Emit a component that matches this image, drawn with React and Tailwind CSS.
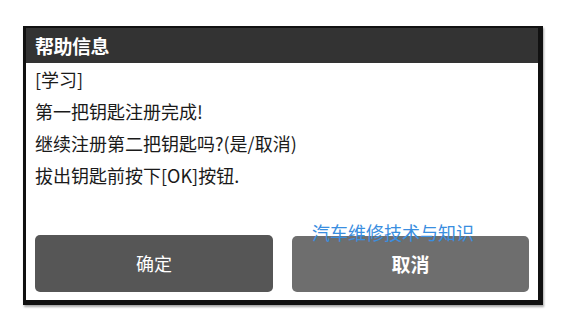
import React from "react";

const lines = [
  "[学习]",
  "第一把钥匙注册完成!",
  "继续注册第二把钥匙吗?(是/取消)",
  "拔出钥匙前按下[OK]按钮.",
];

const App = () => {
  return (
    <div
      className="relative w-[569px] h-[326px] bg-white pt-[26px] pl-[23px]"
      style={{ fontFamily: '"Noto Sans CJK SC", "Noto Sans", sans-serif' }}
    >
      {/* DIALOG */}
      <div className="w-[520px] h-[279px] flex flex-col border-l-[3px] border-t-[2px] border-r-[5px] border-b-[5px] border-[#111] bg-white shadow-[1px_2px_2px_rgba(0,0,0,0.35)]">
        {/* TITLE */}
        <div className="h-[35px] bg-[#333333] flex items-center pl-[9px] text-white text-[19px] font-bold leading-none tracking-[-0.5px]">
          帮助信息
        </div>

        {/* MESSAGE */}
        <div className="pl-[9px] text-[18px] leading-[32px] text-[#1a1a1a]">
          {lines.map((l) => (
            <p key={l}>{l}</p>
          ))}
        </div>

        {/* BUTTONS */}
        <div className="mt-auto mb-[8px] px-[9px] flex gap-[19px]">
          <button className="w-[238px] h-[57px] rounded-[5px] bg-[#565656] text-white text-[18px]">
            确定
          </button>
          <button className="w-[237px] h-[56px] mt-[1px] rounded-[5px] bg-[#6e6e6e] text-white text-[19px] font-bold">
            取消
          </button>
        </div>
      </div>

      {/* WATERMARK */}
      <span className="absolute left-[312px] top-[220px] text-[18px] leading-[24px] text-[#3a8ee0]">
        汽车维修技术与知识
      </span>
    </div>
  );
};

export default App;
